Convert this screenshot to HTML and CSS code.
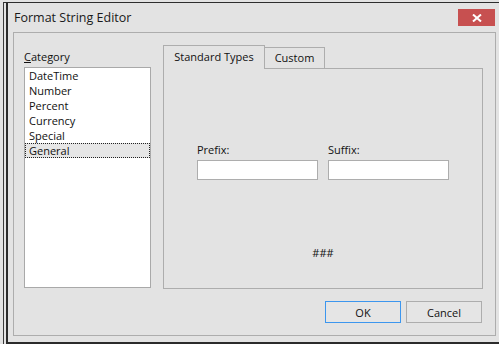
FILE: index.html
```html
<!DOCTYPE html>
<html>
<head>
<meta charset="utf-8">
<link rel="stylesheet" href="styles.css">
</head>
<body>
<div class="desk">
  <div class="frame">
    <div class="window">
      <div class="titlebar">
        <span class="title">Format String Editor</span>
        <button class="close" aria-label="Close">
          <svg width="10" height="8" viewBox="0 0 10 8"><path d="M1 0.5 L9 7.5 M9 0.5 L1 7.5" stroke="#fff" stroke-width="2" fill="none"/></svg>
        </button>
      </div>
      <div class="panel">
        <div class="main">
          <div class="category">
            <div class="cat-label"><u>C</u>ategory</div>
            <ul class="listbox">
              <li>DateTime</li>
              <li>Number</li>
              <li>Percent</li>
              <li>Currency</li>
              <li>Special</li>
              <li class="selected">General</li>
            </ul>
          </div>
          <div class="tabctl">
            <div class="tabs">
              <div class="tab active">Standard Types</div>
              <div class="tab">Custom</div>
            </div>
            <div class="tabpanel">
              <div class="fields">
                <div class="field"><div class="flabel">Prefix:</div><div class="input"></div></div>
                <div class="field"><div class="flabel">Suffix:</div><div class="input"></div></div>
              </div>
              <div class="sample">###</div>
            </div>
          </div>
        </div>
        <div class="buttons">
          <button class="btn default">OK</button>
          <button class="btn">Cancel</button>
        </div>
      </div>
    </div>
  </div>
</div>
</body>
</html>
```
FILE: styles.css
```css
* { box-sizing: border-box; }
html, body { margin: 0; padding: 0; }
body {
  width: 499px;
  height: 344px;
  overflow: hidden;
  background: #e3e3e3;
  font-family: "Open Sans", "Noto Sans", sans-serif;
  font-size: 11px;
  color: #111;
}
.desk { height: 344px; padding: 2px 0 0 3px; }
.frame {
  height: 342px;
  border-left: 1px solid #3a3a3a;
  border-top: 1px solid #2e2e2e;
  padding-left: 2px;
}
.window {
  width: 493px;
  height: 341px;
  border-left: 2px solid #2b2b2b;
  border-bottom: 2px solid #2b2b2b;
  background: #e3e3e3;
  display: flex;
  flex-direction: column;
}
.titlebar {
  height: 29px;
  flex: none;
  display: flex;
  align-items: flex-start;
  justify-content: space-between;
  padding: 0 4px 0 6px;
}
.title {
  margin-top: 7px;
  font-size: 12.5px;
  line-height: 16px;
  color: #1a1a1a;
}
.close {
  margin-top: 6px;
  width: 37px;
  height: 17px;
  padding: 0;
  border: none;
  background: #c75050;
  display: flex;
  align-items: center;
  justify-content: center;
}
.close svg { display: block; }
.panel {
  flex: none;
  height: 304px;
  margin: 0 3px 6px 5px;
  border: 1px solid #adadad;
  padding: 12px 12px 12px 10px;
  display: flex;
  flex-direction: column;
}
.main { display: flex; gap: 12px; height: 244px; }
.category { width: 127px; flex: none; }
.cat-label { padding-top: 4px; height: 22px; line-height: 15px; }
.listbox {
  list-style: none;
  margin: 0;
  padding: 0;
  height: 221px;
  background: #fff;
  border: 1px solid #a9a9a9;
}
.listbox li { height: 15px; line-height: 15px; padding-left: 4px; white-space: nowrap; }
.listbox li.selected {
  background: #e6e6e6;
  border: 1px dotted #222;
  line-height: 13px;
  padding-left: 3px;
}
.tabctl { width: 320px; flex: none; display: flex; flex-direction: column; }
.tabs { display: flex; align-items: flex-end; height: 23px; flex: none; }
.tab {
  width: 60px;
  height: 21px;
  border: 1px solid #adadad;
  border-left: none;
  border-bottom: none;
  padding-top: 2px;
  line-height: 15px;
  text-align: center;
  white-space: nowrap;
}
.tab.active {
  width: 102px;
  height: 24px;
  border-left: 1px solid #adadad;
  padding-top: 3px;
  margin-bottom: -1px;
  background: #e3e3e3;
  position: relative;
  z-index: 1;
}
.tabpanel {
  flex: 1;
  border: 1px solid #adadad;
  display: flex;
  flex-direction: column;
  align-items: center;
  padding-top: 73px;
}
.fields { display: flex; gap: 10px; }
.flabel { height: 18px; line-height: 15px; }
.input { width: 121px; height: 20px; background: #fff; border: 1px solid #adadad; }
.sample { margin-top: 65px; line-height: 15px; }
.buttons {
  display: flex;
  justify-content: flex-end;
  gap: 5px;
  padding-right: 1px;
  margin-top: 12px;
}
.btn {
  width: 76px;
  height: 22px;
  padding: 0;
  border: 1px solid #adadad;
  background: #e5e5e5;
  font-family: inherit;
  font-size: 11px;
  color: #111;
}
.btn.default { border-color: #3c96ee; }
```
